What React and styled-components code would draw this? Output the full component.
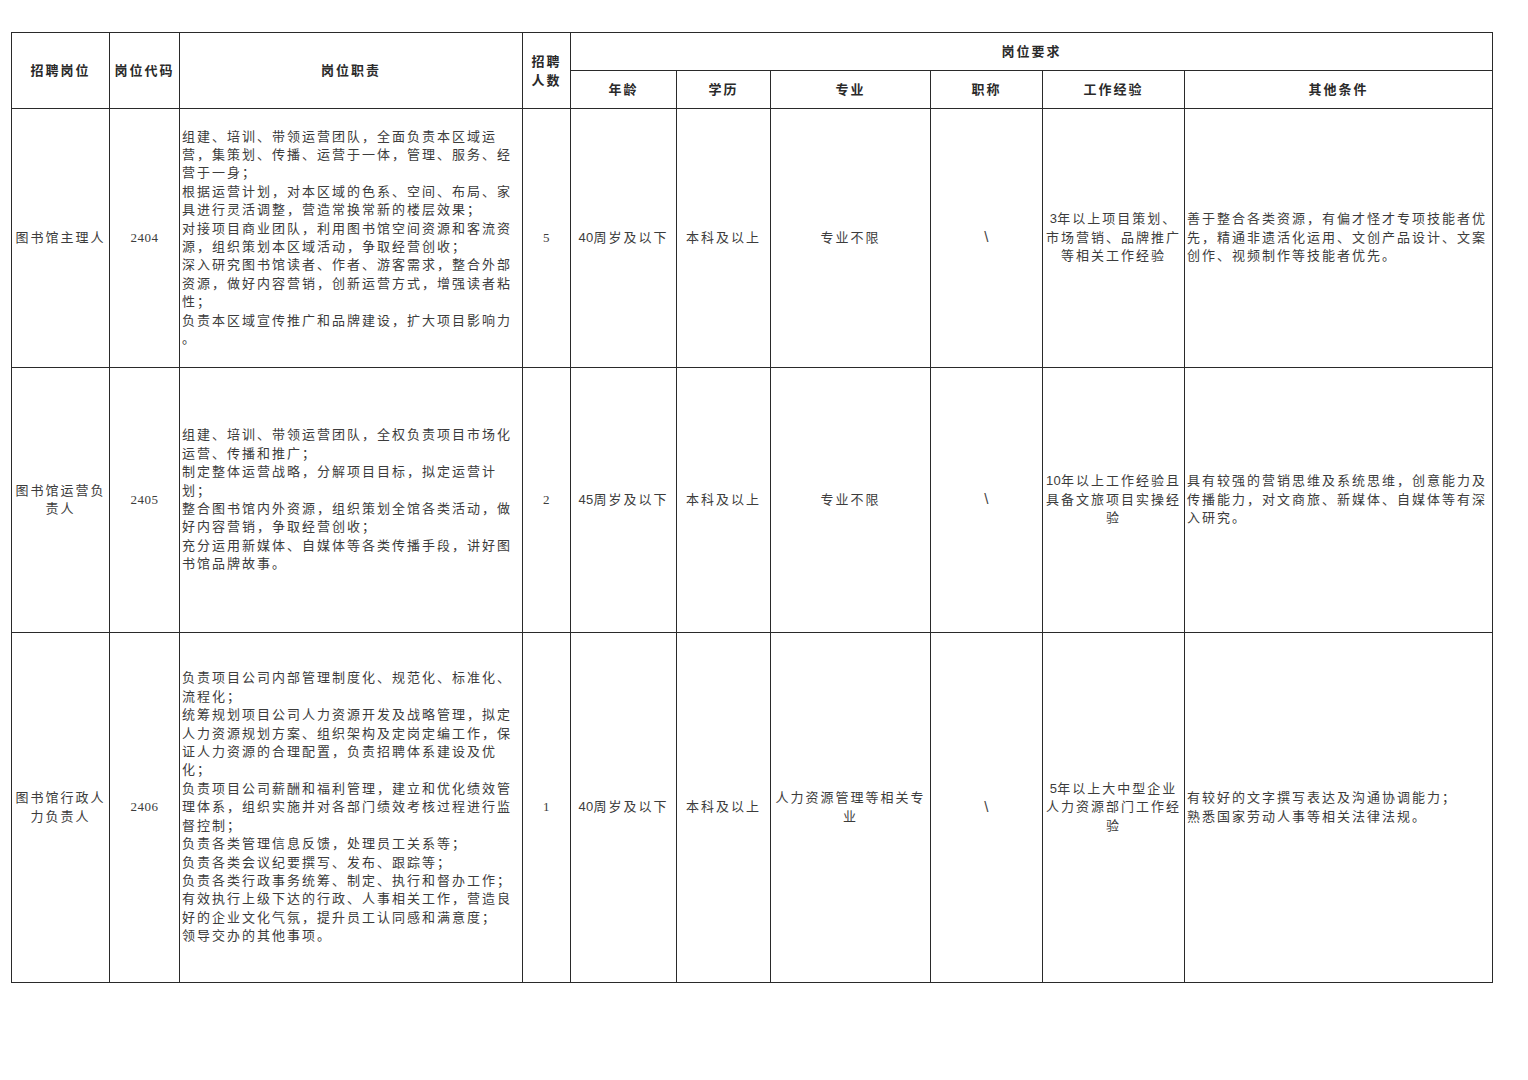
import React from "react";
import styled, { createGlobalStyle } from "styled-components";

const Global = createGlobalStyle`
  html, body { margin: 0; padding: 0; background: #fff; }
  body { font-family: "Liberation Serif", "Noto Sans CJK SC", serif; }
`;

const Page = styled.div`
  padding: 32px 0 0 11px;
  width: 1528px;
  height: 1080px;
  box-sizing: border-box;
`;

const Table = styled.table`
  border-collapse: collapse;
  table-layout: fixed;
  width: 1481px;
  font-family: "Liberation Serif", "Noto Sans CJK SC", serif;
  font-size: 13px;
  line-height: 18.4px;
  color: #3c3c3c;
`;

const Th = styled.th`
  border: 1px solid #2a2a2a;
  height: ${(p) => p.$h || 37}px;
  padding: 2px 0 0;
  font-weight: 700;
  color: #2a2a2a;
  letter-spacing: 2px;
  text-align: center;
  vertical-align: middle;
  box-sizing: border-box;
`;

const Td = styled.td`
  border: 1px solid #2a2a2a;
  height: ${(p) => p.$h}px;
  padding: ${(p) => (p.$align === "left" ? "0 0 0 2px" : "0")};
  text-align: ${(p) => p.$align || "center"};
  vertical-align: middle;
  letter-spacing: ${(p) => (p.$num ? "0.5px" : "2px")};
  box-sizing: border-box;
  overflow: hidden;
`;

const Line = styled.div`
  white-space: nowrap;
`;

const Digits = styled.span`
  font-family: "Liberation Sans", "Noto Sans CJK SC", sans-serif;
  letter-spacing: 0.3px;
`;

const Slash = styled.span`
  font-family: "Liberation Sans", sans-serif;
  font-size: 15px;
  color: #444;
`;

const cols = [98, 70, 343, 48, 106, 94, 160, 112, 142, 308];

const withDigits = (text) => {
  const m = /^(\d+)(.*)$/.exec(text);
  if (!m) return text;
  return (
    <>
      <Digits>{m[1]}</Digits>
      {m[2]}
    </>
  );
};

const Cell = ({ lines, ...rest }) => (
  <Td {...rest}>
    {lines.map((l, i) => (
      <Line key={i}>{withDigits(l)}</Line>
    ))}
  </Td>
);

const rows = [
  {
    h: 259,
    name: ["图书馆主理人"],
    code: "2404",
    duty: [
      "组建、培训、带领运营团队，全面负责本区域运",
      "营，集策划、传播、运营于一体，管理、服务、经",
      "营于一身；",
      "根据运营计划，对本区域的色系、空间、布局、家",
      "具进行灵活调整，营造常换常新的楼层效果；",
      "对接项目商业团队，利用图书馆空间资源和客流资",
      "源，组织策划本区域活动，争取经营创收；",
      "深入研究图书馆读者、作者、游客需求，整合外部",
      "资源，做好内容营销，创新运营方式，增强读者粘",
      "性；",
      "负责本区域宣传推广和品牌建设，扩大项目影响力",
      "。",
    ],
    count: "5",
    age: "40周岁及以下",
    edu: "本科及以上",
    major: ["专业不限"],
    exp: ["3年以上项目策划、", "市场营销、品牌推广", "等相关工作经验"],
    other: [
      "善于整合各类资源，有偏才怪才专项技能者优",
      "先，精通非遗活化运用、文创产品设计、文案",
      "创作、视频制作等技能者优先。",
    ],
  },
  {
    h: 265,
    name: ["图书馆运营负", "责人"],
    code: "2405",
    duty: [
      "组建、培训、带领运营团队，全权负责项目市场化",
      "运营、传播和推广；",
      "制定整体运营战略，分解项目目标，拟定运营计",
      "划；",
      "整合图书馆内外资源，组织策划全馆各类活动，做",
      "好内容营销，争取经营创收；",
      "充分运用新媒体、自媒体等各类传播手段，讲好图",
      "书馆品牌故事。",
    ],
    count: "2",
    age: "45周岁及以下",
    edu: "本科及以上",
    major: ["专业不限"],
    exp: ["10年以上工作经验且", "具备文旅项目实操经", "验"],
    other: [
      "具有较强的营销思维及系统思维，创意能力及",
      "传播能力，对文商旅、新媒体、自媒体等有深",
      "入研究。",
    ],
  },
  {
    h: 350,
    name: ["图书馆行政人", "力负责人"],
    code: "2406",
    duty: [
      "负责项目公司内部管理制度化、规范化、标准化、",
      "流程化；",
      "统筹规划项目公司人力资源开发及战略管理，拟定",
      "人力资源规划方案、组织架构及定岗定编工作，保",
      "证人力资源的合理配置，负责招聘体系建设及优",
      "化；",
      "负责项目公司薪酬和福利管理，建立和优化绩效管",
      "理体系，组织实施并对各部门绩效考核过程进行监",
      "督控制；",
      "负责各类管理信息反馈，处理员工关系等；",
      "负责各类会议纪要撰写、发布、跟踪等；",
      "负责各类行政事务统筹、制定、执行和督办工作；",
      "有效执行上级下达的行政、人事相关工作，营造良",
      "好的企业文化气氛，提升员工认同感和满意度；",
      "领导交办的其他事项。",
    ],
    count: "1",
    age: "40周岁及以下",
    edu: "本科及以上",
    major: ["人力资源管理等相关专", "业"],
    exp: ["5年以上大中型企业", "人力资源部门工作经", "验"],
    other: [
      "有较好的文字撰写表达及沟通协调能力；",
      "熟悉国家劳动人事等相关法律法规。",
    ],
  },
];

export default function App() {
  return (
    <>
      <Global />
      <Page>
        <Table>
          <colgroup>
            {cols.map((w, i) => (
              <col key={i} style={{ width: w }} />
            ))}
          </colgroup>
          <thead>
            <tr>
              <Th rowSpan={2}>招聘岗位</Th>
              <Th rowSpan={2}>岗位代码</Th>
              <Th rowSpan={2}>岗位职责</Th>
              <Th rowSpan={2}>
                <Line>招聘</Line>
                <Line>人数</Line>
              </Th>
              <Th colSpan={6} $h={38}>岗位要求</Th>
            </tr>
            <tr>
              <Th $h={38}>年龄</Th>
              <Th $h={38}>学历</Th>
              <Th $h={38}>专业</Th>
              <Th $h={38}>职称</Th>
              <Th $h={38}>工作经验</Th>
              <Th $h={38}>其他条件</Th>
            </tr>
          </thead>
          <tbody>
            {rows.map((r) => (
              <tr key={r.code}>
                <Cell $h={r.h} lines={r.name} />
                <Td $h={r.h} $num>{r.code}</Td>
                <Cell $h={r.h} $align="left" lines={r.duty} />
                <Td $h={r.h} $num>{r.count}</Td>
                <Td $h={r.h}>{withDigits(r.age)}</Td>
                <Td $h={r.h}>{r.edu}</Td>
                <Cell $h={r.h} lines={r.major} />
                <Td $h={r.h} $num>
                  <Slash>\</Slash>
                </Td>
                <Cell $h={r.h} lines={r.exp} />
                <Cell $h={r.h} $align="left" lines={r.other} />
              </tr>
            ))}
          </tbody>
        </Table>
      </Page>
    </>
  );
}
